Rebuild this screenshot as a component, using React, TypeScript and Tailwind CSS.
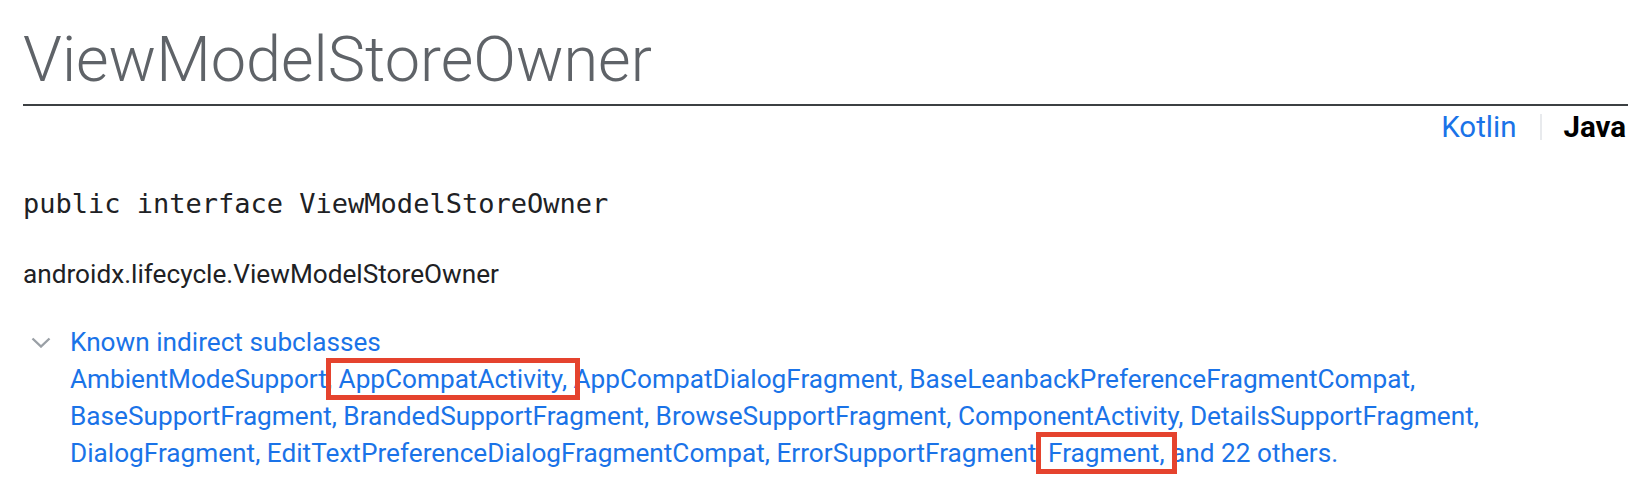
import React from 'react'

const linkClass = 'text-[#1a73e8]'

function Chevron() {
  return (
    <svg width="20" height="11" viewBox="0 0 20 11" fill="none">
      <path d="M1.5 1.5L10 9.5L18.5 1.5" stroke="#9aa0a6" strokeWidth="2.4" />
    </svg>
  )
}

export default function App() {
  return (
    <div className="min-h-screen bg-white pl-[23px] pr-[16px] font-['Roboto',sans-serif] text-[#202124]">
      {/* Page title */}
      <h1 className="border-b-2 border-[#3c4043] pt-[28px] pb-[13px] text-[63px] font-light leading-[63px] text-[#5f6368]">
        ViewModelStoreOwner
      </h1>

      {/* Language switch */}
      <div className="mt-[7px] flex items-center justify-end text-[29.5px] leading-[28px]">
        <span className={linkClass}>Kotlin</span>
        <span className="ml-[24px] mr-[21px] h-[26px] w-[2px] bg-[#e8eaed]" />
        <span className="mr-[2px] font-bold text-black">Java</span>
      </div>

      {/* Declaration */}
      <div className="mt-[49px] font-['DejaVu_Sans_Mono',monospace] text-[27px] leading-[27px]">
        public interface ViewModelStoreOwner
      </div>

      <div className="mt-[44px] text-[26.2px] leading-[26px]">androidx.lifecycle.ViewModelStoreOwner</div>

      {/* Known indirect subclasses */}
      <div className="mt-[37px] flex text-[26.2px] leading-[37px]">
        <div className="flex h-[37px] w-[47px] shrink-0 items-center pl-[8px]">
          <Chevron />
        </div>
        <div className={linkClass}>
          <div>Known indirect subclasses</div>
          <div>
            AmbientModeSupport,
            <span className="outline-[5px] outline-offset-[1px] outline-[#e5432e]"> AppCompatActivity, </span>
            AppCompatDialogFragment, BaseLeanbackPreferenceFragmentCompat, BaseSupportFragment,
            BrandedSupportFragment, BrowseSupportFragment, ComponentActivity, DetailsSupportFragment,
            DialogFragment, EditTextPreferenceDialogFragmentCompat, ErrorSupportFragment,
            <span className="outline-[5px] outline-offset-[1px] outline-[#e5432e]"> Fragment, </span>
            and 22 others.
          </div>
        </div>
      </div>
    </div>
  )
}
